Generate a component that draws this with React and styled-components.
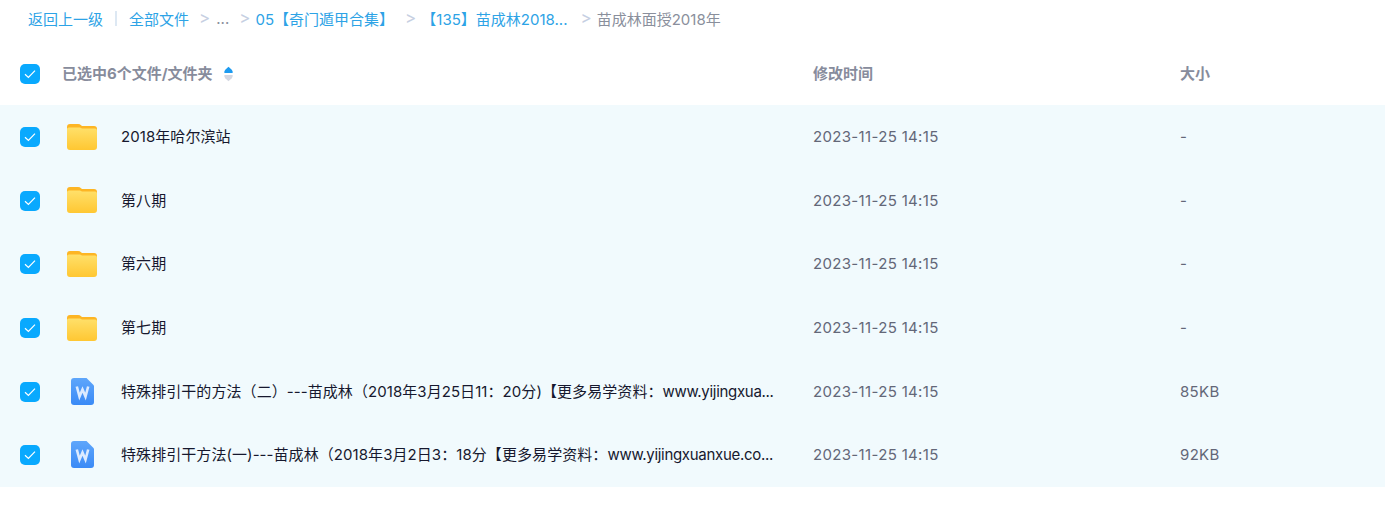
import React from 'react';
import styled, { createGlobalStyle } from 'styled-components';

const Global = createGlobalStyle`
  html, body { margin: 0; padding: 0; background: #fff; }
  body { font-family: Inter, "Noto Sans CJK SC", sans-serif; font-size: 15px; }
`;
const Page = styled.div`width: 1385px; height: 522px; overflow: hidden; background: #fff;`;
const Crumbs = styled.nav`
  height: 42px; padding: 0 0 6px 28px; box-sizing: border-box;
  display: flex; align-items: center; font-size: 15px; white-space: nowrap;
`;
const CrumbLink = styled.span`color: #2da3e6; margin-left: ${p => p.$ml || 0}px;`;
const CrumbMuted = styled.span`color: #8a8f9c; margin-left: ${p => p.$ml || 0}px;`;
const Bar = styled.span`width: 2px; height: 15px; background: #dde8f3; margin: 0 12px;`;
const Sep = styled.span`color: #c6cfe2; margin-left: ${p => p.$ml || 0}px; font-size: 17px; line-height: 1;`;
const Grid = styled.div`
  display: grid; grid-template-columns: 47px 54px 692px 367px 1fr; align-items: center;
  padding-left: 20px; box-sizing: border-box;
`;
const HeadRow = styled(Grid)`
  height: 63px; font-size: 15px; font-weight: 700; color: #878c9c;
  grid-template-columns: 42px 751px 367px 1fr;
`;
const HeadLabel = styled.div`padding-bottom: 3px;`;
const Rows = styled.div`background: #f1fafd;`;
const Row = styled(Grid)`height: 63.6px;`;
const Check = styled.span`
  width: 20px; height: 20px; border-radius: 5px; background: #09a9fe;
  display: flex; align-items: center; justify-content: center;
`;
const RowCheck = styled(Check)`margin-top: 1px;`;
const HeadName = styled.div`display: flex; align-items: center; gap: 11px;`;
const IconCell = styled.div`display: flex; padding-left: ${p => p.$pl}px;`;
const Name = styled.div`
  color: #16182e; font-size: 15px; letter-spacing: 0.07px; white-space: nowrap; padding-bottom: 2px;
`;
const Url = styled.span`letter-spacing: -0.3px;`;
const Cell = styled.div`color: #636778; font-size: 15px; letter-spacing: 0.33px;`;

const Tick = () => (
  <svg width="12" height="10" viewBox="0 0 12 10" fill="none">
    <path d="M1 5.2 4.4 8.4 11 1.6" stroke="#fff" strokeWidth="1.2" />
  </svg>
);
const SortIcon = () => (
  <svg width="9" height="16" viewBox="0 0 10 16">
    <path d="M5 0 L8.6 3.4 Q10 5 9.6 7 H.4 Q0 5 1.4 3.4 Z" fill="#1d9bf0" />
    <path d="M.4 9 H9.6 Q10 11 8.6 12.6 L5 16 L1.4 12.6 Q0 11 .4 9 Z" fill="#d3d7e2" />
  </svg>
);
const Folder = () => (
  <svg width="30" height="26" viewBox="0 0 30 26">
    <defs>
      <linearGradient id="fold" x1="0" y1="0" x2="0" y2="1">
        <stop offset="0" stopColor="#ffe06a" />
        <stop offset="1" stopColor="#ffc732" />
      </linearGradient>
    </defs>
    <path d="M0 3 Q0 0 3 0 H11 Q13 0 14 1.2 L15 2 H27 Q30 2 30 5 V10 H0 Z" fill="#fdb524" />
    <path d="M0 5 Q0 3.5 2 3.5 H13 L15 4.5 H28 Q30 4.5 30 6.5 V23 Q30 26 27 26 H3 Q0 26 0 23 Z" fill="url(#fold)" />
  </svg>
);
const Word = () => (
  <svg width="23" height="27" viewBox="0 0 23 27">
    <defs>
      <linearGradient id="wrd" x1="0" y1="0" x2="0" y2="1">
        <stop offset="0" stopColor="#5ea6fb" />
        <stop offset="1" stopColor="#3a8af6" />
      </linearGradient>
    </defs>
    <path d="M3 0 H15.5 L23 7.5 V24 Q23 27 20 27 H3 Q0 27 0 24 V3 Q0 0 3 0 Z" fill="url(#wrd)" />
    <path d="M5.8 8.5 L8.5 18.6 L11.5 11.5 L14.5 18.6 L17.2 8.5" fill="none" stroke="#dcebff" strokeWidth="2.6" />
  </svg>
);

const items = [
  { name: '2018年哈尔滨站', size: '-', t: 'f' },
  { name: '第八期', size: '-', t: 'f' },
  { name: '第六期', size: '-', t: 'f' },
  { name: '第七期', size: '-', t: 'f' },
  { name: '特殊排引干的方法（二）---苗成林（2018年3月25日11：20分)【更多易学资料：', url: 'www.yijingxua...', size: '85KB', t: 'w' },
  { name: '特殊排引干方法(一)---苗成林（2018年3月2日3：18分【更多易学资料：', url: 'www.yijingxuanxue.co...', size: '92KB', t: 'w' },
];

export default function App() {
  return (
    <Page>
      <Global />
      <Crumbs>
        <CrumbLink>返回上一级</CrumbLink>
        <Bar />
        <CrumbLink>全部文件</CrumbLink>
        <Sep $ml={10}>&gt;</Sep>
        <CrumbMuted $ml={6}>...</CrumbMuted>
        <Sep $ml={10}>&gt;</Sep>
        <CrumbLink $ml={5}>05【奇门遁甲合集】</CrumbLink>
        <Sep $ml={11}>&gt;</Sep>
        <CrumbLink $ml={5}>【135】苗成林2018...</CrumbLink>
        <Sep $ml={13}>&gt;</Sep>
        <CrumbMuted $ml={5}>苗成林面授2018年</CrumbMuted>
      </Crumbs>
      <HeadRow>
        <Check><Tick /></Check>
        <HeadName><HeadLabel>已选中6个文件/文件夹</HeadLabel> <SortIcon /></HeadName>
        <HeadLabel>修改时间</HeadLabel>
        <HeadLabel>大小</HeadLabel>
      </HeadRow>
      <Rows>
        {items.map((it, i) => (
          <Row key={i}>
            <RowCheck><Tick /></RowCheck>
            {it.t === 'f'
              ? <IconCell $pl={0}><Folder /></IconCell>
              : <IconCell $pl={4}><Word /></IconCell>}
            <Name>{it.name}{it.url && <Url>{it.url}</Url>}</Name>
            <Cell>2023-11-25 14:15</Cell>
            <Cell>{it.size}</Cell>
          </Row>
        ))}
      </Rows>
    </Page>
  );
}
